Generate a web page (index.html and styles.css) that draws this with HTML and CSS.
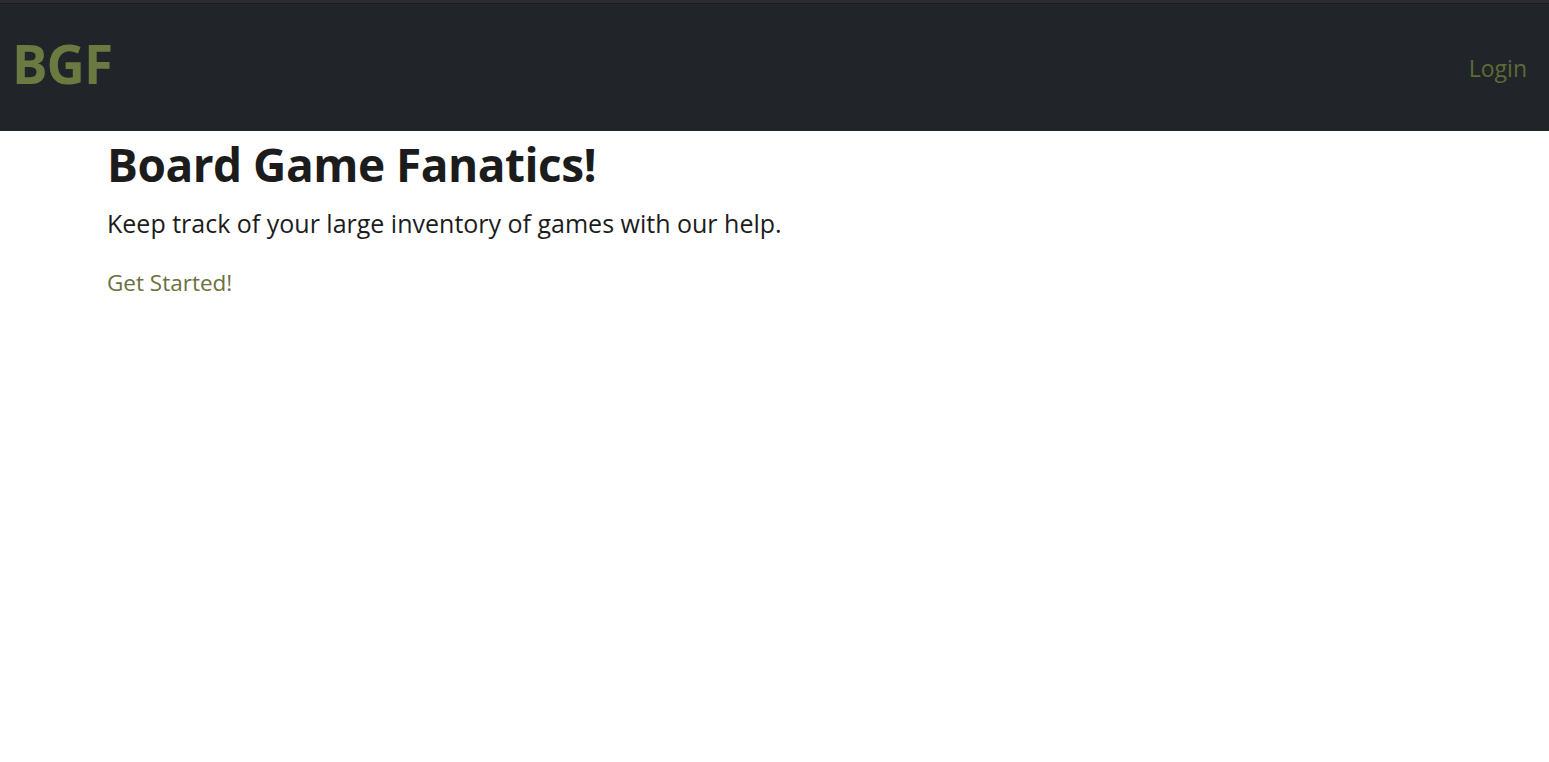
FILE: index.html
```html
<!DOCTYPE html>
<html lang="en">
<head>
<meta charset="utf-8">
<title>Board Game Fanatics</title>
<link rel="stylesheet" href="styles.css">
</head>
<body>
<div class="topstrip"></div>
<nav class="navbar">
  <a class="brand" href="#">BGF</a>
  <a class="login" href="#">Login</a>
</nav>
<main class="hero">
  <h1 class="title">Board Game Fanatics!</h1>
  <p class="lead">Keep track of your large inventory of games with our help.</p>
  <a class="cta" href="#">Get Started!</a>
</main>
</body>
</html>
```
FILE: styles.css
```css
html, body {
  margin: 0;
  padding: 0;
  background: #ffffff;
  font-family: "Open Sans", "Noto Sans", sans-serif;
  color: #1c1c1c;
}
.topstrip {
  height: 3px;
  background: #2b2a33;
  border-bottom: 1px solid #1a1b1e;
}
.navbar {
  height: 127px;
  background: #212529;
  display: flex;
  align-items: center;
  justify-content: space-between;
  padding: 0 22px 0 12px;
}
.brand {
  color: #6b7a40;
  font-weight: 700;
  font-size: 53px;
  text-decoration: none;
  line-height: 1;
  letter-spacing: -1px;
  padding-bottom: 8px;
}
.login {
  color: #5d6a37;
  font-size: 23px;
  text-decoration: none;
}
.hero {
  padding: 0 107px;
  display: flex;
  flex-direction: column;
  align-items: flex-start;
}
.title {
  margin: 6px 0 0;
  font-size: 46px;
  font-weight: 700;
  line-height: 1.2;
  letter-spacing: -0.5px;
}
.lead {
  margin: 13px 0 23px;
  font-size: 25px;
  line-height: 1.5;
}
.cta {
  color: #6b7040;
  font-size: 22.5px;
  line-height: 1.5;
  text-decoration: none;
}
```
